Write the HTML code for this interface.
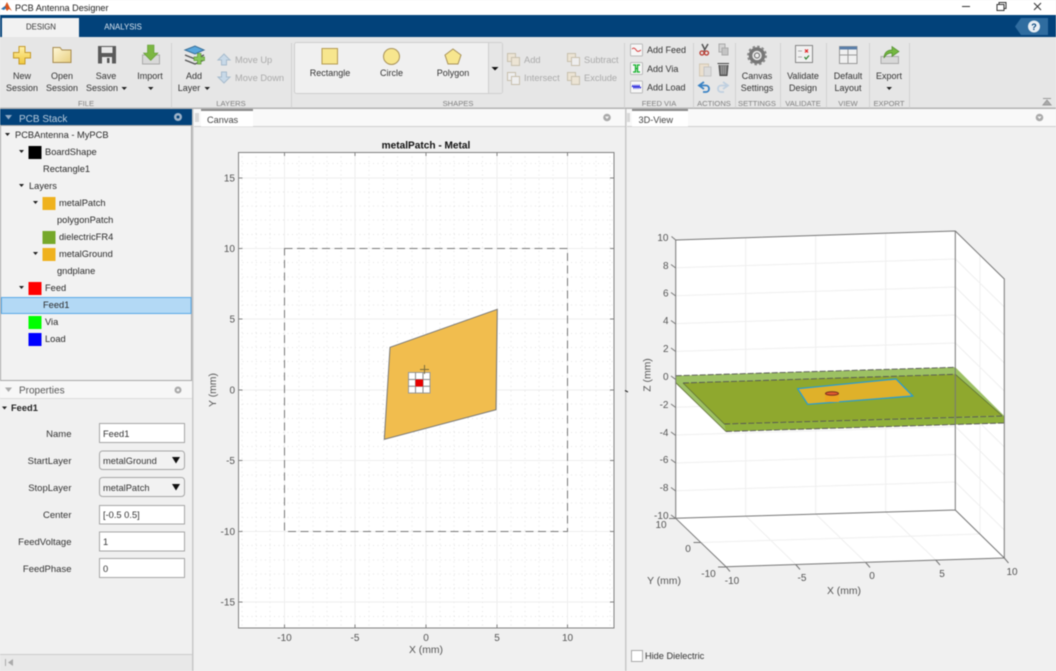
<!DOCTYPE html>
<html><head><meta charset="utf-8"><title>PCB Antenna Designer</title>
<style>
html,body{margin:0;padding:0;background:#f0f0f0;width:1056px;height:671px;overflow:hidden}
svg{display:block;filter:blur(.4px)}
text{font-family:"Liberation Sans",Arial,sans-serif;font-size:9px;fill:#333}
.m{text-anchor:middle}.e{text-anchor:end}
.g{fill:#aaa;font-size:9.300px}.f{font-size:7.600px;fill:#808080;text-anchor:middle}
.t{font-size:9.300px;fill:#2a2a2a}.p{font-size:9.500px;fill:#333}
.v{font-size:9.300px;fill:#333}
.tk{font-size:10px;fill:#555}.lb{font-size:10.400px;fill:#555}
</style></head><body>
<svg xmlns="http://www.w3.org/2000/svg" width="1056" height="671" viewBox="0 0 1056 671">
<defs>
<linearGradient id="y" x1="0" y1="0" x2="0" y2="1"><stop offset="0" stop-color="#fff0a8"/><stop offset="1" stop-color="#f0c83c"/></linearGradient>
<linearGradient id="fo" x1="0" y1="0" x2="1" y2="1"><stop offset="0" stop-color="#fff8d8"/><stop offset="1" stop-color="#e8cf80"/></linearGradient>
</defs>
<rect width="1056" height="671" fill="#f0f0f0"/>
<!-- title bar -->
<rect width="1056" height="15" fill="#fff"/>
<path d="M1 9 L5 6 L7 2 L10 8 L12 11 L9 9 L7 11 L5 8 Z" fill="#d9541e"/><path d="M1 9 L5 6 L6 8 L4 10Z" fill="#2a76b8"/>
<text x="15" y="11" style="font-size:9.100px;fill:#222">PCB Antenna Designer</text>
<path d="M962 6.500H970" stroke="#333" fill="none"/>
<path d="M997 4.500H1004V10.500H997ZM999 4.500V2.500H1006V8.500H1004" stroke="#333" fill="none"/>
<path d="M1034 3L1041 10M1041 3L1034 10" stroke="#333" fill="none"/>
<!-- blue band -->
<rect y="15" width="1056" height="22" fill="#02427a"/>
<path d="M2 37V18H79V37Z" fill="#f2f2f2"/>
<text x="41" y="29.500" class="m" style="font-size:7.800px;fill:#333">DESIGN</text>
<text x="123" y="29.500" class="m" style="font-size:7.800px;fill:#dce6f0">ANALYSIS</text>
<path d="M1021 18H1048V35H1021L1015 26.500Z" fill="#2f6c9f"/>
<circle cx="1034" cy="26.500" r="6" fill="#e8eef4"/>
<text x="1034" y="30" class="m" style="font-size:9px;font-weight:bold;fill:#02427a">?</text>
<!-- ribbon -->
<rect y="37" width="1056" height="71" fill="#e6e6e6"/>
<rect y="107.500" width="1056" height="1.500" fill="#b4b4b4"/>
<g stroke="#d2d2d2"><path d="M171.500 43V108M291.500 43V108M624.500 43V108M693.500 43V108M735.500 43V108M780.500 43V108M826.500 43V108M869.500 43V108M909.500 43V108"/></g>
<!-- FILE icons -->
<path d="M19 46.500H25V52.500H30.500V58H25V64H19V58H13.500V52.500H19Z" fill="url(#y)" stroke="#c49a2c"/>
<path d="M53 62.500V47.500H60L62 50H71V62.500Z" fill="url(#fo)" stroke="#a88c50"/>
<path d="M98 46H116V63.500H98Z" fill="#5a5a5a"/><rect x="101.500" y="47" width="11" height="6" fill="#e8e8e8"/><rect x="102" y="57" width="10" height="6.500" fill="#e8e8e8"/><rect x="107" y="58" width="2.500" height="5" fill="#555"/>
<path d="M142.500 55H159.500V64H142.500Z" fill="#d8d8d8" stroke="#aaa"/><path d="M147.500 45H154V53H158L150.700 60.500L143.500 53H147.500Z" fill="#7cb742" stroke="#5e9a34" stroke-width=".6"/>
<!-- add layer -->
<path d="M185 50L195 46L204 50L195 54Z" fill="#5aa7dc" stroke="#3a6f98"/>
<path d="M185 55L195 59L204 55M185 60L195 64L204 60" stroke="#555" stroke-width="1.300" fill="none"/>
<path d="M198 57H201.500V53.500H205V57H208.500V60.500H205V64H201.500V60.500H198Z" fill="#88c75a" stroke="#5e9a34" stroke-width=".7" transform="translate(-4 0)"/>
<path d="M224 54L230 60H226.500V65H221.500V60H218Z" fill="#c8d9e8" stroke="#a8bccd"/>
<path d="M224 83L230 77H226.500V72H221.500V77H218Z" fill="#c8d9e8" stroke="#a8bccd"/>
<!-- shapes -->
<rect x="294.500" y="42.500" width="208" height="51" rx="2" fill="#f0f0f0" stroke="#cfcfcf"/>
<path d="M488.500 42.500V93.500" stroke="#cfcfcf"/><rect x="489" y="43" width="13" height="50" fill="#e6e6e6"/>
<path d="M491.500 67H498.500L495 70.500Z" fill="#111"/>
<rect x="322" y="48.500" width="15.500" height="15.500" fill="#f7e68e" stroke="#b59b52"/>
<circle cx="391.500" cy="56.500" r="8" fill="#f7e68e" stroke="#a8925a"/>
<path d="M453 49L461 55L458 64H448L445 55Z" fill="#f7e68e" stroke="#a8925a"/>
<!-- disabled boolean icons -->
<g fill="#ece4d4" stroke="#c8c0ae"><rect x="507.500" y="53.500" width="8" height="8"/><rect x="511.500" y="57.500" width="8" height="8"/>
<rect x="567.500" y="53.500" width="8" height="8"/><rect x="571.500" y="57.500" width="8" height="8" fill="#eee"/>
<rect x="507.500" y="72.500" width="8" height="8" fill="#eee"/><rect x="511.500" y="76.500" width="8" height="8" fill="#eee"/>
<rect x="567.500" y="72.500" width="8" height="8"/><rect x="571.500" y="76.500" width="8" height="8"/></g>
<!-- feed via icons -->
<g fill="#f6f6f6" stroke="#bbb"><rect x="630.500" y="44" width="12" height="12" rx="1"/><rect x="630.500" y="62.500" width="12" height="12" rx="1"/><rect x="630.500" y="81" width="12" height="12" rx="1"/></g>
<path d="M632 49C634 47 635.500 49 636.500 50.500C637.500 52 639 51.500 641 50" stroke="#d83c3c" fill="none"/>
<path d="M633 65H635.500V72H633M640 65H637.500V72H640M635.500 68.500H637.500" stroke="#12b02a" stroke-width="1.300" fill="none"/>
<path d="M632 87L633 85.500L634 88L635 85.500L636 88L637 85.500L638 88L639 85.500L640 88L641 87" stroke="#2222dd" fill="none"/>
<!-- actions -->
<path d="M702 44L705 50M708 44L704 51" stroke="#555" stroke-width="1.500" fill="none"/><circle cx="702" cy="53" r="2" fill="none" stroke="#b83a30" stroke-width="1.300"/><circle cx="706.500" cy="53" r="2" fill="none" stroke="#b83a30" stroke-width="1.300"/>
<rect x="719" y="44" width="6" height="8" fill="#d4d4d4" stroke="#aaa"/><rect x="722" y="48" width="6" height="7" fill="#c4c4c4" stroke="#aaa"/>
<rect x="699.500" y="64" width="9" height="12" fill="#eadfce" stroke="#d2c8b4"/><rect x="704" y="67" width="7" height="9" fill="#dcdcdc" stroke="#c4c4c4"/>
<path d="M717.500 63.500H729M719 65L720 75.500H727L728 65" fill="#777" stroke="#444"/><path d="M721.500 66V74M723.500 66V74M725.500 66V74" stroke="#aaa" stroke-width=".7"/>
<path d="M704 82L699 85.500L704 89M699.500 85.500H706C710 85.500 710 92 706 92H703" fill="none" stroke="#3a82c4" stroke-width="1.800"/>
<path d="M723 82L728 85.500L723 89M727.500 85.500H721C717 85.500 717 92 721 92H724" fill="none" stroke="#c0d0e0" stroke-width="1.800"/>
<!-- gear -->
<circle cx="757" cy="55.500" r="6.500" fill="none" stroke="#777" stroke-width="3.500"/><circle cx="757" cy="55.500" r="9" fill="none" stroke="#888" stroke-width="1.800" stroke-dasharray="2.500 2.200"/><circle cx="757" cy="55.500" r="2.500" fill="#eee" stroke="#666"/>
<!-- validate -->
<rect x="795.500" y="45.500" width="17" height="17" fill="#f0f0f0" stroke="#888"/><path d="M798 51H802M798 57H802" stroke="#aaa"/><path d="M805 49.500L808 52.500M808 49.500L805 52.500" stroke="#e02020" stroke-width="1.200"/><path d="M804.500 57L806 59L809 55.500" stroke="#308030" stroke-width="1.200" fill="none"/>
<!-- layout -->
<rect x="839.500" y="46.500" width="17.500" height="17" fill="#f0f0f0" stroke="#999"/><rect x="839.500" y="46.500" width="17.500" height="3" fill="#5a7ea8"/><path d="M839.500 55H857M848 49.500V63.500" stroke="#999"/>
<!-- export -->
<path d="M881 56.500H898.500V63.500H881Z" fill="#d8d8d8" stroke="#aaa"/><path d="M884 58C884 52 888 50 892 50V46.500L899 51.500L892 56.500V53C888 53 885.500 55 884 58Z" fill="#74b840" stroke="#4e8a2c" stroke-width=".7"/>
<path d="M1043 98.500H1051M1047 100L1051 105H1043Z" stroke="#999" fill="#aaa"/>
<!-- ribbon text -->
<text x="22" y="79" class="m">New</text><text x="22" y="91" class="m">Session</text>
<text x="62" y="79" class="m">Open</text><text x="62" y="91" class="m">Session</text>
<text x="106" y="79" class="m">Save</text><text x="102" y="91" class="m">Session</text>
<text x="150" y="79" class="m">Import</text>
<text x="194" y="79" class="m">Add</text><text x="189" y="91" class="m">Layer</text>
<text x="330" y="76" class="m">Rectangle</text><text x="391.500" y="76" class="m">Circle</text><text x="453" y="76" class="m">Polygon</text>
<text x="757" y="79" class="m">Canvas</text><text x="757" y="91" class="m">Settings</text>
<text x="803" y="79" class="m">Validate</text><text x="803" y="91" class="m">Design</text>
<text x="848" y="79" class="m">Default</text><text x="848" y="91" class="m">Layout</text>
<text x="889" y="79" class="m">Export</text>
<path d="M121.500 87H127L124.200 90ZM148 87H153.500L150.800 90ZM204.500 87H210L207.200 90ZM886.500 87H892L889.200 90Z" fill="#222"/>
<text x="235" y="63" class="g">Move Up</text><text x="235" y="81" class="g">Move Down</text>
<text x="524" y="63" class="g">Add</text><text x="524" y="81" class="g">Intersect</text>
<text x="584" y="63" class="g">Subtract</text><text x="584" y="81" class="g">Exclude</text>
<text x="647" y="53">Add Feed</text><text x="647" y="72">Add Via</text><text x="647" y="90.500">Add Load</text>
<text x="86" y="106" class="f">FILE</text><text x="231" y="106" class="f">LAYERS</text><text x="458" y="106" class="f">SHAPES</text><text x="659" y="106" class="f">FEED VIA</text><text x="714" y="106" class="f">ACTIONS</text><text x="757" y="106" class="f">SETTINGS</text><text x="803" y="106" class="f">VALIDATE</text><text x="848" y="106" class="f">VIEW</text><text x="889" y="106" class="f">EXPORT</text>
<!-- left panel -->
<rect y="109" width="192" height="16" fill="#02427a"/>
<path d="M5 115H12L8.500 119.500Z" fill="#8fa9c4"/>
<text x="19" y="122" style="font-size:10px;fill:#b9cbdc">PCB Stack</text>
<circle cx="178" cy="117" r="4" fill="#9db2c8"/><circle cx="178" cy="117" r="1.500" fill="#02427a"/>
<rect x=".5" y="125.500" width="191" height="255" fill="#f2f2f2" stroke="#a8a8a8"/>
<rect x="1.500" y="297.500" width="189.500" height="16" fill="#b3d9f5" stroke="#5aa9e6"/>
<path d="M5 133H10L7.500 136ZM19 150H24L21.500 153ZM19 184H24L21.500 187ZM33 201H38L35.500 204ZM33 252H38L35.500 255ZM19 286H24L21.500 289Z" fill="#222"/>
<rect x="28.500" y="146" width="13" height="13" fill="#000"/>
<rect x="42.500" y="197" width="13" height="13" fill="#efb21e"/>
<rect x="42.500" y="231" width="13" height="13" fill="#76a82a"/>
<rect x="42.500" y="248" width="13" height="13" fill="#efb21e"/>
<rect x="28.500" y="282" width="13" height="13" fill="#f00"/>
<rect x="28.500" y="316" width="13" height="13" fill="#0f0"/>
<rect x="28.500" y="333" width="13" height="13" fill="#00f"/>
<text x="15" y="138" class="t">PCBAntenna - MyPCB</text>
<text x="45" y="155" class="t">BoardShape</text>
<text x="43" y="172" class="t">Rectangle1</text>
<text x="29" y="189" class="t">Layers</text>
<text x="59" y="206" class="t">metalPatch</text>
<text x="57" y="223" class="t">polygonPatch</text>
<text x="59" y="240" class="t">dielectricFR4</text>
<text x="59" y="257" class="t">metalGround</text>
<text x="57" y="274" class="t">gndplane</text>
<text x="45" y="291" class="t">Feed</text>
<text x="43" y="308" class="t">Feed1</text>
<text x="45" y="325" class="t">Via</text>
<text x="45" y="342" class="t">Load</text>
<!-- properties -->
<rect y="381" width="192" height="17" fill="#f7f7f7"/><path d="M0 398.500H192" stroke="#ddd"/>
<path d="M5 387.500H12L8.500 392Z" fill="#aaa"/>
<text x="19" y="393.500" style="font-size:10px;fill:#555">Properties</text>
<circle cx="178" cy="390" r="3.500" fill="#aaa"/><circle cx="178" cy="390" r="1.300" fill="#f7f7f7"/>
<path d="M2 406.500H7L4.500 409.500Z" fill="#222"/>
<text x="11" y="411" style="font-size:9.300px;font-weight:bold;fill:#222">Feed1</text>
<text x="71.500" y="437" class="p e">Name</text>
<text x="71.500" y="464" class="p e">StartLayer</text>
<text x="71.500" y="491" class="p e">StopLayer</text>
<text x="71.500" y="518" class="p e">Center</text>
<text x="71.500" y="545" class="p e">FeedVoltage</text>
<text x="71.500" y="572" class="p e">FeedPhase</text>
<g fill="#fff" stroke="#a6a6a6"><rect x="99.500" y="423.500" width="85" height="19"/><rect x="99.500" y="505.500" width="85" height="18.500"/><rect x="99.500" y="532" width="85" height="19"/><rect x="99.500" y="558.500" width="85" height="19"/></g>
<g fill="#f2f2f2" stroke="#a6a6a6"><rect x="99.500" y="451" width="85" height="18.500" rx="3"/><rect x="99.500" y="477.500" width="85" height="19" rx="3"/></g>
<path d="M172 457H180L176 463.500ZM172 484H180L176 490.500Z" fill="#111"/>
<text x="103" y="437" class="v">Feed1</text><text x="103" y="464" class="v">metalGround</text><text x="103" y="491" class="v">metalPatch</text><text x="103" y="518" class="v">[-0.5 0.5]</text><text x="103" y="545" class="v">1</text><text x="103" y="572" class="v">0</text>
<rect y="654" width="192" height="17" fill="#e8e8e8"/><path d="M0 654.500H192" stroke="#ccc"/>
<path d="M5.500 659V666" stroke="#aaa"/><path d="M13 659V666L8 662.500Z" fill="#aaa"/>
<!-- dividers -->
<rect x="192" y="109" width="1.500" height="562" fill="#c8c8c8"/>
<rect x="625" y="109" width="1.500" height="562" fill="#c8c8c8"/>
<!-- tab bars -->
<rect x="194" y="109" width="431" height="17" fill="#f9f9f9"/><rect x="627" y="109" width="429" height="17" fill="#f9f9f9"/>
<path d="M194 126.500H625M627 126.500H1056" stroke="#d0d0d0"/>
<rect x="195" y="113" width="4" height="9" fill="#d8d8d8"/><rect x="627" y="113" width="3" height="9" fill="#d8d8d8"/>
<rect x="201" y="109" width="52" height="17.500" fill="#fff"/><rect x="201" y="109" width="52" height="2" fill="#8c8c8c"/>
<rect x="632" y="109" width="56" height="17.500" fill="#fff"/><rect x="632" y="109" width="56" height="2" fill="#8c8c8c"/>
<text x="207" y="123" style="font-size:9.200px;fill:#444">Canvas</text>
<text x="638.500" y="123" style="font-size:9.200px;fill:#444">3D-View</text>
<circle cx="607" cy="117.500" r="3.800" fill="#aaa"/><path d="M605 116.500H609L607 119Z" fill="#f9f9f9"/>
<circle cx="1039.500" cy="117.500" r="3.800" fill="#aaa"/><path d="M1037.500 116.500H1041.500L1039.500 119Z" fill="#f9f9f9"/>
<!-- 2D plot -->
<text x="426" y="148.500" class="m" style="font-size:10.100px;font-weight:bold;fill:#111">metalPatch - Metal</text>
<rect x="238.500" y="152.500" width="375.500" height="475.500" fill="#fff"/>
<path d="M242 152V628M256 152V628M270 152V628M299 152V628M313 152V628M327 152V628M341 152V628M369 152V628M383.500 152V628M397.500 152V628M412 152V628M440 152V628M454 152V628M468.500 152V628M482.500 152V628M511 152V628M525 152V628M539 152V628M553 152V628M582 152V628M596 152V628M610 152V628M238 163.500H614M238 192H614M238 206H614M238 220H614M238 234.500H614M238 262.500H614M238 277H614M238 291H614M238 305H614M238 333.500H614M238 347.500H614M238 361.500H614M238 376H614M238 404H614M238 418.500H614M238 432.500H614M238 446.500H614M238 475H614M238 489H614M238 503H614M238 517.500H614M238 545.500H614M238 560H614M238 574H614M238 588H614M238 616.500H614" stroke="#e4e4e4" stroke-width="1" stroke-dasharray="1 3.500" fill="none"/>
<path d="M284.500 152V628M355 152V628M426 152V628M497 152V628M567.500 152V628M238 178H614M238 248.500H614M238 319H614M238 390H614M238 460.500H614M238 531.500H614M238 602H614" stroke="#eeeeee" fill="none"/>
<rect x="238.500" y="152.500" width="375.500" height="475.500" fill="none" stroke="#808080"/>
<path d="M284.500 152.500V156M355 152.500V156M426 152.500V156M497 152.500V156M567.500 152.500V156M284.500 628V624.500M355 628V624.500M426 628V624.500M497 628V624.500M567.500 628V624.500M238.500 178H242.500M238.500 248.500H242.500M238.500 319H242.500M238.500 390H242.500M238.500 460.500H242.500M238.500 531.500H242.500M238.500 602H242.500M614 178H610M614 248.500H610M614 319H610M614 390H610M614 460.500H610M614 531.500H610M614 602H610" stroke="#808080" fill="none"/>
<rect x="284.500" y="248.500" width="283" height="283" fill="none" stroke="#777" stroke-dasharray="8 4.500"/>
<path d="M390 347.300L497.300 309.300L496 409.700L384.300 439.300Z" fill="#f1bd4e" stroke="#777"/>
<path d="M408.500 372.500H430V393H408.500Z" fill="#fff" stroke="#999"/>
<path d="M415.500 372.500V393M423 372.500V393M408.500 379.500H430M408.500 386.300H430" stroke="#888" fill="none"/>
<rect x="415.500" y="379.500" width="7.500" height="7" fill="#e80000"/>
<path d="M420 369.500H429M424.500 365V374" stroke="#7a6a3a" fill="none"/>
<text x="235" y="181.500" class="tk e">15</text><text x="235" y="252" class="tk e">10</text><text x="235" y="322.500" class="tk e">5</text><text x="235" y="393.500" class="tk e">0</text><text x="235" y="464" class="tk e">-5</text><text x="235" y="535" class="tk e">-10</text><text x="235" y="605.500" class="tk e">-15</text>
<text x="284.500" y="641" class="tk m">-10</text><text x="355" y="641" class="tk m">-5</text><text x="426" y="641" class="tk m">0</text><text x="497" y="641" class="tk m">5</text><text x="567.500" y="641" class="tk m">10</text>
<text x="426" y="653" class="lb m">X (mm)</text>
<text transform="translate(216 390) rotate(-90)" class="lb m">Y (mm)</text>
<!-- 3D plot -->
<path d="M675.700 240L955.300 231L1004.300 279V558L726 566.700L675.700 518.300Z" fill="#fff"/>
<g stroke="#efefef" fill="none">
<path d="M745.700 238V516M815.700 235.500V514M885.700 233.500V512M980 255V534"/>
<path d="M675.700 267.800L955.300 259L1004.300 307M675.700 295.700L955.300 287L1004.300 335M675.700 323.600L955.300 315L1004.300 363M675.700 351.400L955.300 343L1004.300 391M675.700 379.300L955.300 371L1004.300 419M675.700 407.200L955.300 398.500L1004.300 447M675.700 435L955.300 426.500L1004.300 475M675.700 463L955.300 454.500L1004.300 503M675.700 490.700L955.300 482L1004.300 530"/>
<path d="M745.700 516L795.700 564.500M815.700 514L865.700 562.500M885.700 512L935.700 560M700.500 542.500L980 534"/>
</g>
<path d="M675.700 375.700L955.300 367.300L1004.300 416V423L726 431.500L675.700 382.700Z" fill="#9dc163"/>
<path d="M683 383L955.300 374.300L1002 415.500L724.300 424Z" fill="#8fa82e"/>
<path d="M724.300 424L1004.300 416V423L726 431.500Z" fill="#8fb03a"/>
<path d="M675.700 375.700L955.300 367.300M683 383L955.300 374.300M724.300 424L1004.300 416M726 431.500L1004.300 423" stroke="#555" stroke-width=".9" stroke-dasharray="6 2" fill="none"/>
<path d="M675.700 382.700L726 431.500M683 383L724.300 424M955.300 374.300L1002 415.500" stroke="#5e6e34" stroke-width=".8" fill="none"/>
<path d="M797.700 388.700L896 379L912.700 396L807.700 404.300Z" fill="#dfb12a" stroke="#1e9be0" stroke-width="1.200"/>
<rect x="825" y="394" width="14" height="8" fill="#eba520"/>
<ellipse cx="832" cy="393.500" rx="6.500" ry="1.800" fill="#e05a30" stroke="#7a3020"/>
<path d="M675.700 240L955.300 231L1004.300 279V558M675.700 240V518.300M955.300 231V510L1004.300 558M675.700 518.300L955.300 510M675.700 518.300L726 566.700L1004.300 558" stroke="#777" fill="none"/>
<path d="M671.500 236.500L675.700 240M671 264.500L675.700 268M671 292.500L675.700 296M671 320.500L675.700 324M671 348L675.700 351.500M671 376L675.700 379.500M671 404L675.700 407.500M671 432L675.700 435.500M671 459.500L675.700 463M671 487.500L675.700 491M671 515L675.700 518.500M669 518.500H675.700M693.500 542.500H700.500M718 567H726M726 566.700L730 571.500M795.700 564.500L800 569.500M865.700 562.500L870 567.500M935.700 560L940 565M1004.300 558L1008.500 563" stroke="#777" fill="none"/>
<text x="668.500" y="241" class="tk e">10</text><text x="668.500" y="269" class="tk e">8</text><text x="668.500" y="296.500" class="tk e">6</text><text x="668.500" y="324" class="tk e">4</text><text x="668.500" y="352" class="tk e">2</text><text x="668.500" y="380" class="tk e">0</text><text x="668.500" y="408" class="tk e">-2</text><text x="668.500" y="436" class="tk e">-4</text><text x="668.500" y="463" class="tk e">-6</text><text x="668.500" y="491" class="tk e">-8</text><text x="668.500" y="519" class="tk e">-10</text>
<text x="661" y="528" class="tk m">10</text><text x="688" y="552" class="tk m">0</text><text x="708.500" y="577" class="tk m">-10</text>
<text x="732" y="584" class="tk m">-10</text><text x="802" y="581" class="tk m">-5</text><text x="872" y="579" class="tk m">0</text><text x="942" y="577" class="tk m">5</text><text x="1012" y="575" class="tk m">10</text>
<text x="844" y="594" class="lb m">X (mm)</text><text x="664" y="584" class="lb m">Y (mm)</text>
<text transform="translate(650.500 375) rotate(-90)" class="lb m">Z (mm)</text>
<rect x="631.500" y="650.500" width="11" height="11" fill="#fff" stroke="#aaa"/>
<text x="645" y="659" style="font-size:9.200px;fill:#333">Hide Dielectric</text>
<path d="M625 390.500L628 392" stroke="#222"/>
</svg>
</body></html>
